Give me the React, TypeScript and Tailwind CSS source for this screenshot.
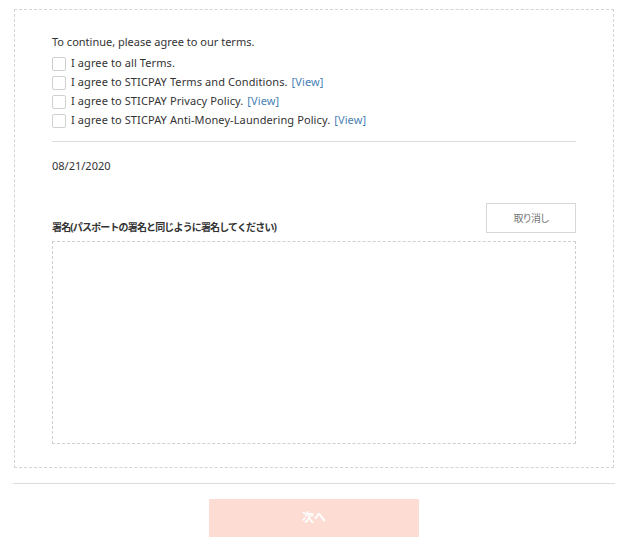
const TERMS = [
  { label: "I agree to all Terms.", view: false },
  { label: "I agree to STICPAY Terms and Conditions.", view: true },
  { label: "I agree to STICPAY Privacy Policy.", view: true },
  { label: "I agree to STICPAY Anti-Money-Laundering Policy.", view: true },
];

export default function App() {
  return (
    <div
      className="w-[628px] h-[550px] bg-white text-[#333] pt-[9px]"
      style={{ fontFamily: '"Noto Sans", "Noto Sans CJK JP", sans-serif' }}
    >
      <div className="mx-[14px] border border-dashed border-[#d4d4d4] px-[37px] pt-[24px] pb-[23px]">
        <p className="text-[11px] leading-[16px]">To continue, please agree to our terms.</p>
        <div className="mt-[4px] flex flex-col">
          {TERMS.map((t) => (
            <label key={t.label} className="flex items-center h-[19px] text-[11px] tracking-[0.1px]">
              <span className="w-[14px] h-[14px] border border-[#d0d0d0] rounded-[2px] bg-white mr-[5px]" />
              <span>{t.label}</span>
              {t.view && <span className="ml-[4px] text-[#4a7fb5]">[View]</span>}
            </label>
          ))}
        </div>
        <div className="mt-[11px] border-t border-[#dcdcdc]" />
        <p className="mt-[16px] text-[11px] leading-[16px]">08/21/2020</p>
        <div className="mt-[29px] flex items-end justify-between">
          <span className="text-[10px] leading-[14px] font-bold tracking-[-0.85px] -mb-[1px]">
            署名(パスポートの署名と同じように署名してください)
          </span>
          <button className="w-[90px] h-[30px] border border-[#d8d8d8] bg-white text-[10px] tracking-[-1.2px] text-[#777]">
            取り消し
          </button>
        </div>
        <div className="mt-[8px] h-[203px] border border-dashed border-[#cfcfcf]" />
      </div>
      <div className="mx-[13px] mt-[15px] border-t border-[#dcdcdc]" />
      <div className="flex justify-center mt-[15px]">
        <button className="w-[210px] h-[38px] bg-[#fcdcd3] text-white text-[12px] font-bold">
          次へ
        </button>
      </div>
    </div>
  );
}
